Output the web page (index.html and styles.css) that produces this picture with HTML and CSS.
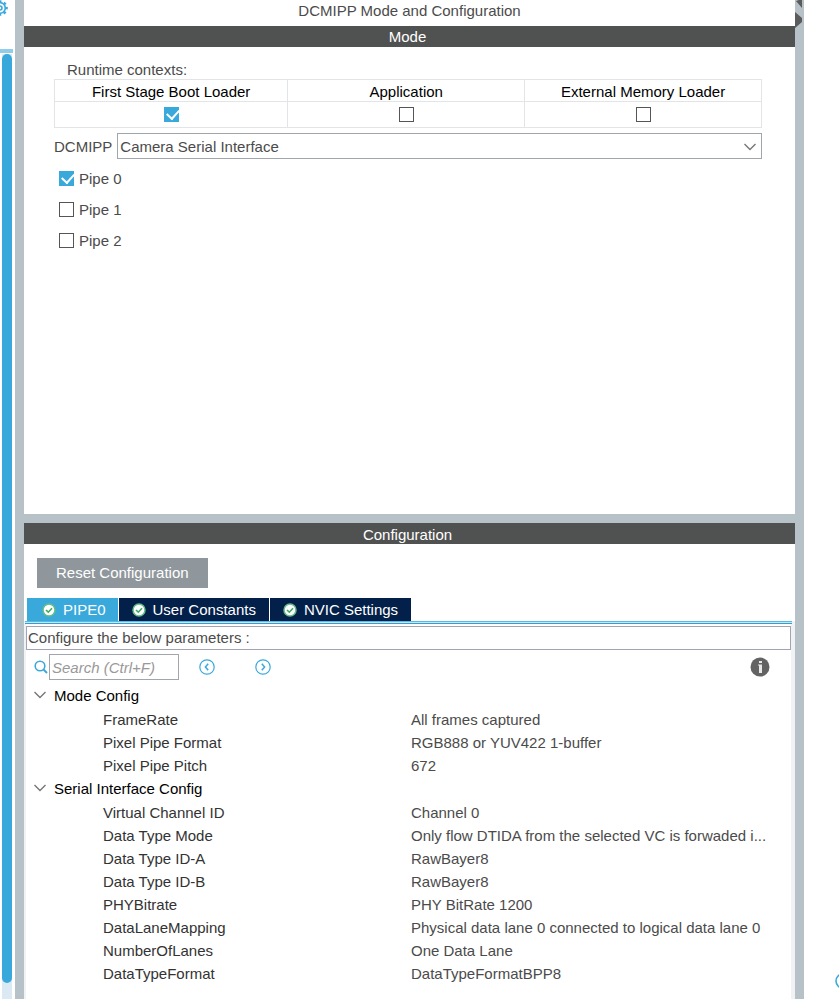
FILE: index.html
```html
<!DOCTYPE html>
<html lang="en">
<head>
<meta charset="utf-8">
<title>DCMIPP Mode and Configuration</title>
<link rel="stylesheet" href="styles.css">
</head>
<body>
<svg class="symbols" aria-hidden="true">
  <symbol id="ok" viewBox="0 0 14 14">
    <circle cx="7" cy="7" r="6" fill="#fff" stroke="#63bd84" stroke-width="1.5"/>
    <path d="M4 7l2.300 2.200L10 5.300" fill="none" stroke="#3fa866" stroke-width="1.600"/>
  </symbol>
  <symbol id="down" viewBox="0 0 12 8">
    <path d="M.5 1L6 6.500 11.500 1" fill="none" stroke="#777" stroke-width="1.400"/>
  </symbol>
</svg>
<div class="app">
  <aside class="rail">
    <div class="rail-head">
      <svg class="gear" width="16" height="16" viewBox="-8 -8 16 16" aria-hidden="true">
        <circle r="5.300" fill="none" stroke="#39a9dc" stroke-width="1.700"/>
        <circle r="6.700" fill="none" stroke="#39a9dc" stroke-width="2.200" stroke-dasharray="2.630 2.630" stroke-dashoffset="1.310"/>
        <circle r="2" fill="none" stroke="#39a9dc" stroke-width="1.600"/>
      </svg>
    </div>
    <div class="track"><div class="thumb"></div></div>
  </aside>
  <div class="divider"></div>
  <main class="panel">
    <section class="mode">
      <h1>DCMIPP Mode and Configuration</h1>
      <h2 class="bar">Mode</h2>
      <div class="mode-body">
        <table class="contexts">
          <caption>Runtime contexts:</caption>
          <thead>
            <tr><th id="fsbl">First Stage Boot Loader</th><th id="appli">Application</th><th id="extmem">External Memory Loader</th></tr>
          </thead>
          <tbody>
            <tr>
              <td><input type="checkbox" aria-labelledby="fsbl" checked></td>
              <td><input type="checkbox" aria-labelledby="appli"></td>
              <td><input type="checkbox" aria-labelledby="extmem"></td>
            </tr>
          </tbody>
        </table>
        <div class="interface">
          <label for="dcmipp">DCMIPP</label>
          <div class="combo">
            <select id="dcmipp"><option>Camera Serial Interface</option></select>
            <svg class="combo-arrow" width="12" height="8" aria-hidden="true"><use href="#down"/></svg>
          </div>
        </div>
        <div class="pipes">
          <label><input type="checkbox" checked>Pipe 0</label>
          <label><input type="checkbox">Pipe 1</label>
          <label><input type="checkbox">Pipe 2</label>
        </div>
      </div>
    </section>
    <section class="config">
      <h2 class="bar">Configuration</h2>
      <button class="reset" type="button">Reset Configuration</button>
      <div class="tabs" role="tablist">
        <button class="tab active" type="button" role="tab" aria-selected="true"><svg width="14" height="14" aria-hidden="true"><use href="#ok"/></svg>PIPE0</button>
        <button class="tab" type="button" role="tab"><svg width="14" height="14" aria-hidden="true"><use href="#ok"/></svg>User Constants</button>
        <button class="tab" type="button" role="tab"><svg width="14" height="14" aria-hidden="true"><use href="#ok"/></svg>NVIC Settings</button>
      </div>
      <div class="pane">
        <p class="hint">Configure the below parameters :</p>
        <div class="tools">
          <label for="search" aria-label="Search">
            <svg width="14" height="14" viewBox="0 0 14 14" aria-hidden="true"><circle cx="6" cy="6" r="4.800" fill="none" stroke="#39a9dc" stroke-width="1.600"/><path d="M9.500 9.500L13 13" stroke="#39a9dc" stroke-width="2"/></svg>
          </label>
          <input id="search" type="text" placeholder="Search (Ctrl+F)">
          <button class="round" type="button" aria-label="Previous">
            <svg width="16" height="16" viewBox="0 0 16 16"><circle cx="8" cy="8" r="7.200" fill="none" stroke="#39a9dc" stroke-width="1.200"/><path d="M9.200 4.800L6.400 8l2.800 3.200" fill="none" stroke="#39a9dc" stroke-width="1.500"/></svg>
          </button>
          <button class="round" type="button" aria-label="Next">
            <svg width="16" height="16" viewBox="0 0 16 16"><circle cx="8" cy="8" r="7.200" fill="none" stroke="#39a9dc" stroke-width="1.200"/><path d="M6.800 4.800L9.600 8l-2.800 3.200" fill="none" stroke="#39a9dc" stroke-width="1.500"/></svg>
          </button>
          <button class="round info" type="button" aria-label="Information">
            <svg width="20" height="20" viewBox="0 0 20 20"><circle cx="10" cy="10" r="9.500" fill="#636363"/><rect x="9" y="4" width="3" height="2" fill="#e8e8e8"/><path d="M8 7.500h4V16H9V8.500H8z" fill="#e8e8e8"/></svg>
          </button>
        </div>
        <table class="params">
          <colgroup><col class="name-col"><col></colgroup>
          <tbody>
            <tr class="group"><th colspan="2"><svg width="12" height="8" aria-hidden="true"><use href="#down"/></svg>Mode Config</th></tr>
            <tr><th>FrameRate</th><td>All frames captured</td></tr>
            <tr><th>Pixel Pipe Format</th><td>RGB888 or YUV422 1-buffer</td></tr>
            <tr><th>Pixel Pipe Pitch</th><td>672</td></tr>
          </tbody>
          <tbody>
            <tr class="group"><th colspan="2"><svg width="12" height="8" aria-hidden="true"><use href="#down"/></svg>Serial Interface Config</th></tr>
            <tr><th>Virtual Channel ID</th><td>Channel 0</td></tr>
            <tr><th>Data Type Mode</th><td>Only flow DTIDA from the selected VC is forwaded i...</td></tr>
            <tr><th>Data Type ID-A</th><td>RawBayer8</td></tr>
            <tr><th>Data Type ID-B</th><td>RawBayer8</td></tr>
            <tr><th>PHYBitrate</th><td>PHY BitRate 1200</td></tr>
            <tr><th>DataLaneMapping</th><td>Physical data lane 0 connected to logical data lane 0</td></tr>
            <tr><th>NumberOfLanes</th><td>One Data Lane</td></tr>
            <tr><th>DataTypeFormat</th><td>DataTypeFormatBPP8</td></tr>
          </tbody>
        </table>
      </div>
    </section>
  </main>
  <div class="divider right">
    <svg width="8" height="28" viewBox="0 0 8 28" aria-hidden="true"><path d="M1 1l3-1h3v8zM0 12v16l7-6v-4z" fill="#595b5c"/></svg>
  </div>
  <aside class="side">
    <svg width="16" height="16" viewBox="0 0 16 16" aria-hidden="true"><circle cx="8" cy="8" r="7" fill="none" stroke="#39a9dc" stroke-width="1.600"/></svg>
  </aside>
</div>
</body>
</html>
```

FILE: styles.css
```css
* { box-sizing: border-box; }
body {
  margin: 0;
  font: 15px/18px "Liberation Sans", Arial, sans-serif;
  color: #4b4b4b;
  background: #fff;
}
h1, h2, p { margin: 0; font-size: inherit; font-weight: normal; }
button, input, select { font: inherit; margin: 0; }
svg { display: block; flex: none; }
.symbols { position: absolute; width: 0; height: 0; }
.app {
  display: grid;
  grid-template-columns: 15px 9px minmax(0, 1fr) 9px 35px;
  height: 100vh;
  overflow: hidden;
}

/* Left rail with its scrollbar */
.rail { display: flex; flex-direction: column; overflow: hidden; }
.rail-head {
  height: 53px;
  margin-right: 2px;
  border-bottom: 4px solid #8fcdea;
}
.gear { margin-left: -8px; }
.track {
  flex: 1;
  margin: 1px 3px 0 2px;
  padding-bottom: 16px;
  background: #dbe9f5;
}
.thumb { height: 100%; border-radius: 5px; background: #39a9dc; }
.divider { background: #b7c2c8; }

/* Main panel */
.panel { display: flex; flex-direction: column; }
.mode {
  flex: 0 0 auto;
  height: 523px;
  border-bottom: 9px solid #b7c2c8;
}
h1 { padding: 2px 0 6px; text-align: center; }
.bar {
  height: 21px;
  padding-right: 4px;
  line-height: 22px;
  color: #fff;
  background: #505251;
  text-align: center;
}
.mode-body { padding: 14px 33px 0 30px; }
.contexts {
  width: 100%;
  table-layout: fixed;
  border-collapse: collapse;
}
.contexts caption { padding-left: 13px; text-align: left; }
.contexts th, .contexts td {
  padding: 0;
  border: 1px solid #e1e5e7;
  text-align: center;
}
.contexts th { height: 22px; padding-top: 2px; color: #000; font-weight: normal; }
.contexts th:first-child { width: 33%; }
.contexts td { height: 26px; }
.contexts input { margin: 0 auto; }
input[type="checkbox"] {
  appearance: none;
  display: block;
  width: 15px;
  height: 15px;
  border: 1px solid #555;
  background: #fff;
}
input[type="checkbox"]:checked { border-color: #39a9dc; background: #39a9dc; }
input[type="checkbox"]:checked::before {
  content: "";
  display: block;
  width: 10px;
  height: 6px;
  margin: 2px 0 0 2px;
  border: solid #fff;
  border-width: 0 0 2px 2px;
  transform: translateY(-1px) rotate(-48deg);
}
.interface { display: flex; align-items: center; gap: 5px; margin-top: 5px; }
.interface label { padding-top: 2px; }
.combo { position: relative; flex: 1; }
.combo select {
  appearance: none;
  display: block;
  width: 100%;
  height: 26px;
  padding: 2px 2px 0;
  border: 1px solid #a0a6ab;
  border-radius: 0;
  color: inherit;
  background: #fff;
}
.combo-arrow { position: absolute; right: 6px; top: 10px; pointer-events: none; }
.pipes { padding: 4px 5px; }
.pipes label { display: flex; align-items: center; gap: 5px; height: 31px; }

/* Configuration */
.config { flex: 1; display: flex; flex-direction: column; }
.config .bar { line-height: 24px; }
.reset {
  align-self: flex-start;
  height: 30px;
  margin: 14px 0 10px 13px;
  padding: 0 19px;
  border: 0;
  color: #fff;
  background: #90979c;
}
.tabs {
  display: flex;
  gap: 1px;
  padding-left: 3px;
}
.tab {
  display: flex;
  align-items: center;
  gap: 7px;
  height: 23px;
  padding: 0 13px;
  border: 0;
  color: #fff;
  background: #03204a;
}
.active { padding: 0 12px 0 15px; background: #39a9dc; }
.pane {
  flex: 1;
  border: solid #f0f2f4;
  border-width: 0 4px 0 2px;
}
.pane::before {
  content: "";
  display: block;
  height: 3px;
  margin: 0 -1px 2px;
  background: linear-gradient(#5db8e2 1px, #c5e6f5 1px 2px, #2f9fd5 2px);
}
.hint { padding: 2px 1px; border: 1px solid #a0a4b4; }
.tools { display: flex; align-items: center; margin-top: 4px; padding: 0 21px 0 8px; }
.tools input {
  width: 130px;
  height: 26px;
  margin: 0 20px 0 1px;
  padding: 0 2px;
  border: 1px solid #a0a6ab;
}
.tools input::placeholder { color: #999; font-style: italic; opacity: 1; }
.round { padding: 0; border: 0; background: none; }
.round + .round { margin-left: 40px; }
.round.info { margin-left: auto; }
.params {
  width: 100%;
  margin-top: 4px;
  table-layout: fixed;
  border-collapse: collapse;
}
.name-col { width: 385px; }
.params th, .params td {
  height: 23px;
  padding: 0;
  font-weight: normal;
  text-align: left;
  white-space: nowrap;
}
.params th { padding-left: 77px; color: #333; }
.params .group th { height: 24px; padding-left: 8px; color: #000; }
.group svg { display: inline-block; margin-right: 8px; vertical-align: 2px; }
.side { display: flex; align-items: flex-end; overflow: hidden; padding: 0 0 10px 31px; }
```
